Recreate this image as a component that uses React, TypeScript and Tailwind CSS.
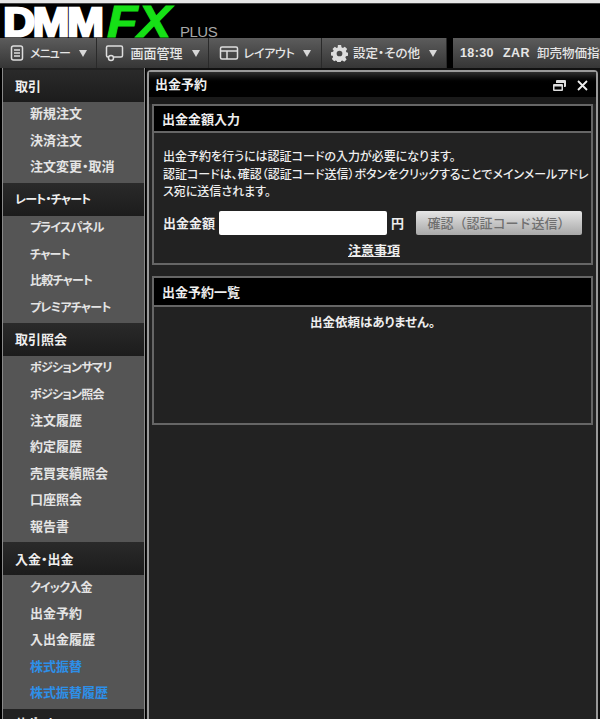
const font = { fontFamily: '"Noto Sans CJK JP", "Liberation Sans", sans-serif', fontFeatureSettings: '"palt"' };
const latin = { fontFamily: '"Liberation Sans", sans-serif' };

const sections = [
    { title: "取引", h: "h-[32px]", items: ["新規注文", "決済注文", "注文変更・取消"] },
    { title: "レート・チャート", h: "h-[33px]", items: ["プライスパネル", "チャート", "比較チャート", "プレミアチャート"] },
    { title: "取引照会", h: "h-[33px]", items: ["ポジションサマリ", "ポジション照会", "注文履歴", "約定履歴", "売買実績照会", "口座照会", "報告書"] },
    { title: "入金・出金", h: "h-[33px]", items: ["クイック入金", "出金予約", "入出金履歴", "株式振替", "株式振替履歴"] },
];

// katakana runs narrower than kanji in the original font
const hasKana = (text: string) => /[ァ-ヶ]/.test(text);
const sizeFor = (text: string) => (hasKana(text) ? "text-[12px] tracking-[-0.8px]" : "text-[13px]");

function Caret() {
    return <span className="ml-[9px] w-0 h-0 border-x-[4px] border-x-transparent border-t-[7px] border-t-[#d8d8d8]" />;
}

function ToolButton({ icon, label, w, text }: { icon: React.ReactNode; label: string; w: string; text: string }) {
    return (
        <div className={`${w} h-full flex items-center justify-center border-r border-[#2a2a2a] bg-gradient-to-b from-[#5c5c5c] to-[#363636] font-medium text-[#e6e6e6]`}>
            {icon}
            <span className={`ml-[5px] whitespace-nowrap ${text}`}>{label}</span>
            <Caret />
        </div>
    );
}

function PanelHeader({ label, h, pt }: { label: string; h: string; pt: string }) {
    return (
        <div className={`${h} ${pt} bg-black flex items-center px-[8px] border-b-2 border-[#666] text-[13px] font-bold text-[#eee]`}>
            {label}
        </div>
    );
}

export default function App() {
    return (
        <div className="w-[600px] h-[719px] overflow-hidden bg-[#1a1a1a] flex flex-col" style={font}>
            <div className="h-[4px] bg-[#e6e6e6] border-b border-[#444] shrink-0" />
            <div className="h-[34px] bg-black shrink-0 flex items-end pl-[1px]">
                <span className="w-[103px] h-[34px] flex items-end justify-center font-bold text-white text-[40px] leading-[32px] tracking-[-2px] [-webkit-text-stroke:2.5px_white] scale-x-[1.1]" style={latin}>DMM</span>
                <span className="ml-[3px] w-[60px] h-[34px] origin-left font-bold italic text-[#16e016] text-[44px] leading-[36px] [-webkit-text-stroke:1px_#16e016] scale-x-[1.14]" style={latin}>FX</span>
                <span className="ml-[13px] -mb-[1px] text-[#a8a8a8] text-[15px] leading-[15px] tracking-[-0.5px] font-light" style={latin}>PLUS</span>
            </div>
            <div className="h-[30px] shrink-0 flex bg-[#333]">
                <ToolButton w="w-[97px]" label="メニュー" text="text-[12px] tracking-[-0.8px]" icon={
                    <svg width="16" height="16" viewBox="0 0 16 16" fill="none" stroke="#ddd" strokeWidth="1.5"><rect x="2.5" y="1" width="11" height="14" rx="2" /><path d="M5 5h6M5 8h6M5 11h6" /></svg>
                } />
                <ToolButton w="w-[112px]" label="画面管理" text="text-[13px]" icon={
                    <svg width="20" height="18" viewBox="0 0 20 18" fill="none" stroke="#ddd" strokeWidth="1.5"><path d="M4 13H3a1.500 1.500 0 0 1-1.500-1.500v-8A1.500 1.500 0 0 1 3 2h13a1.500 1.500 0 0 1 1.500 1.500v8A1.500 1.500 0 0 1 16 13H9" /><circle cx="6" cy="14" r="2.500" /></svg>
                } />
                <ToolButton w="w-[113px]" label="レイアウト" text="text-[12px] tracking-[-0.3px]" icon={
                    <svg width="20" height="16" viewBox="0 0 20 16" fill="none" stroke="#ddd" strokeWidth="1.5"><rect x="1.5" y="2" width="17" height="12" rx="1.5" /><path d="M1.500 6h17M8 6v8" /></svg>
                } />
                <ToolButton w="w-[125px]" label="設定・その他" text="text-[12.5px]" icon={
                    <svg width="17" height="17" viewBox="0 0 16 16" fill="#ddd"><path fillRule="evenodd" d="M6.500 0h3l.4 2.200 1.300.6L13 1.600l2.200 2.200L14 5.600l.5 1.300 1.500.3v3l-2 .4-.5 1.200 1.200 1.800-2.200 2.200-1.800-1.200-1.300.5-.4 1.900h-3l-.4-2-1.300-.5L3 15.400 .8 13.200 2 11.400l-.5-1.200-1.500-.4v-3l2-.4.5-1.300L1.400 3.800 3.600 1.600l1.700 1.200 1-.5zM8 5.300a2.700 2.700 0 1 0 0 5.400 2.700 2.700 0 0 0 0-5.400z" /></svg>
                } />
                <div className="w-[6px] h-full bg-black" />
                <div className="flex-1 h-full flex items-center pl-[7px] bg-gradient-to-b from-[#5c5c5c] to-[#363636] text-[12.5px] font-medium text-[#e6e6e6] whitespace-nowrap overflow-hidden">
                    <span style={latin} className="font-bold tracking-[0.4px]">18:30</span>
                    <span style={latin} className="ml-[9px] font-bold tracking-[0.4px]">ZAR</span>
                    <span className="ml-[7px]">卸売物価指数</span>
                </div>
            </div>
            <div className="flex-1 flex min-h-0 overflow-hidden">
                <div className="w-[146px] shrink-0 pl-[2px] bg-black">
                    <div className="w-[143px] h-full border-l border-r border-[#8a8a8a] bg-[#222] pt-[2px]">
                        {sections.map((s) => (
                            <div key={s.title}>
                                <div className={`${s.h} flex items-center pl-[12px] bg-gradient-to-b from-[#2a2a2a] to-[#1c1c1c] font-bold text-[#eee] ${sizeFor(s.title)}`}>{s.title}</div>
                                <div className="bg-[#555] pb-px">
                                    {s.items.map((it) => (
                                        <div key={it} className={`h-[26.5px] flex items-center pl-[27px] font-bold ${hasKana(it) ? "pb-[3px]" : "pb-[5px]"} ${sizeFor(it)} ${it.startsWith("株式") ? "text-[#2d8fe8]" : "text-[#e4e4e4]"}`}>{it}</div>
                                    ))}
                                </div>
                            </div>
                        ))}
                        <div className="h-[33px] pb-[5px] flex items-center pl-[12px] text-[12px] tracking-[-0.8px] font-bold text-[#eee]">サポート</div>
                    </div>
                </div>
                <div className="flex-1 pl-[1px] pr-[2px] pt-[2px] bg-[#111]">
                    <div className="h-[700px] border-2 border-[#999] rounded-t-[4px] bg-[#222]">
                        <div className="h-[25px] flex items-center justify-between pl-[6px] pr-[8px] bg-gradient-to-b from-[#2e2e2e] via-black to-black text-[13px] font-bold text-[#eee]">
                            <span className="-mt-[1px]">出金予約</span>
                            <span className="flex items-center gap-[11px] mt-[2px]">
                                <svg width="13" height="11" viewBox="0 0 13 11" fill="#ddd"><path d="M4 0h8a1 1 0 0 1 1 1v5a1 1 0 0 1-1 1h-1V3H3V1a1 1 0 0 1 1-1z" /><path fillRule="evenodd" d="M1 4h8a1 1 0 0 1 1 1v5a1 1 0 0 1-1 1H1a1 1 0 0 1-1-1V5a1 1 0 0 1 1-1zm.5 2.500V9.500h7V6.500z" /></svg>
                                <svg width="11" height="11" viewBox="0 0 11 11" stroke="#eee" strokeWidth="1.8"><path d="M1 1l9 9M10 1l-9 9" /></svg>
                            </span>
                        </div>
                        <div className="h-[7px] bg-[#1a1a1a]" />
                        <div className="mx-[3px] border-2 border-[#666] h-[161px]">
                            <PanelHeader label="出金金額入力" h="h-[27px]" pt="pt-[1px]" />
                            <div className="pl-[9px] pr-[2px] pt-[14px] text-[12px] font-medium leading-[17.5px] text-[#eee]">
                                <p>出金予約を行うには認証コードの入力が必要になります。</p>
                                <p>認証コードは、確認（認証コード送信）ボタンをクリックすることでメインメールアドレス宛に送信されます。</p>
                                <div className="flex items-center mt-[11px] h-[25px]">
                                    <span className="w-[56px] shrink-0 text-[13px] font-bold">出金金額</span>
                                    <div className="w-[168px] h-[24px] bg-white rounded-[2px]" />
                                    <span className="ml-[4px] text-[13px] font-bold">円</span>
                                    <button className="ml-[12px] w-[166px] h-[24px] rounded-[2px] bg-gradient-to-b from-[#e6e6e6] to-[#a8a8a8] text-[13px] text-[#707070] font-medium [font-feature-settings:normal]">確認（認証コード送信）</button>
                                </div>
                                <div className="text-center mt-[5px] text-[13px] font-bold underline pr-[4px]">注意事項</div>
                            </div>
                        </div>
                        <div className="h-[11px]" />
                        <div className="mx-[3px] border-2 border-[#666] h-[149px]">
                            <PanelHeader label="出金予約一覧" h="h-[29px]" pt="pt-[1px]" />
                            <div className="text-center pt-[6px] text-[12.5px] font-bold text-[#eee]">出金依頼はありません。</div>
                        </div>
                    </div>
                </div>
            </div>
        </div>
    );
}
